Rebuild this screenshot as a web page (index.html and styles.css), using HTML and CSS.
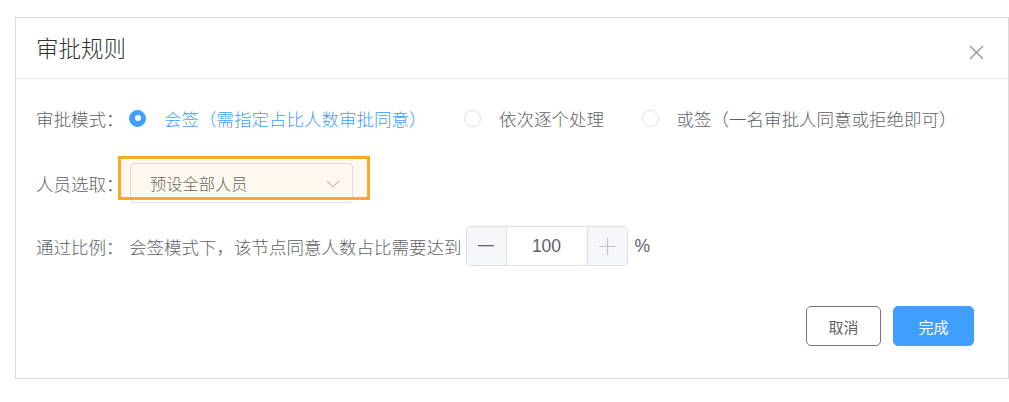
FILE: index.html
```html
<!DOCTYPE html>
<html lang="zh-CN">
<head>
<meta charset="utf-8">
<title>审批规则</title>
<link rel="stylesheet" href="styles.css">
</head>
<body>
<div class="page">
  <div class="dialog">
    <div class="header">
      <span class="title">审批规则</span>
      <span class="close" aria-label="关闭">
        <svg width="15" height="15" viewBox="0 0 15 15"><path d="M1 1 L14 14 M14 1 L1 14" stroke="#909399" stroke-width="1.3" fill="none"/></svg>
      </span>
    </div>
    <div class="body">
      <div class="row">
        <span class="label">审批模式：</span>
        <div class="radios">
          <label class="radio checked"><span class="dot"></span><span class="rtext">会签（需指定占比人数审批同意）</span></label>
          <label class="radio"><span class="dot"></span><span class="rtext">依次逐个处理</span></label>
          <label class="radio"><span class="dot"></span><span class="rtext">或签（一名审批人同意或拒绝即可）</span></label>
        </div>
      </div>
      <div class="row row-select">
        <span class="label">人员选取：</span>
        <div class="select-wrap">
          <div class="select">
            <span>预设全部人员</span>
            <svg class="chev" width="14" height="8" viewBox="0 0 14 8"><path d="M1 1 L7 7 L13 1" stroke="#c0c4cc" stroke-width="1.2" fill="none"/></svg>
          </div>
          <div class="highlight"></div>
        </div>
      </div>
      <div class="row row-ratio">
        <span class="label">通过比例：</span>
        <span class="desc">会签模式下，该节点同意人数占比需要达到</span>
        <div class="number">
          <span class="step minus">
            <svg width="16" height="2" viewBox="0 0 16 2"><rect x="0" y="0" width="16" height="1.3" fill="#606266"/></svg>
          </span>
          <span class="value">100</span>
          <span class="step plus">
            <svg width="17" height="17" viewBox="0 0 17 17"><path d="M8.5 0 V17 M0 8.5 H17" stroke="#c0c4cc" stroke-width="1.2" fill="none"/></svg>
          </span>
        </div>
        <span class="pct">%</span>
      </div>
    </div>
    <div class="footer">
      <button class="btn btn-cancel">取消</button>
      <button class="btn btn-primary">完成</button>
    </div>
  </div>
</div>
</body>
</html>
```

FILE: styles.css
```css
* { box-sizing: border-box; }
html, body {
  margin: 0;
  padding: 0;
  background: #ffffff;
  font-family: "Noto Sans CJK SC", "Noto Sans", sans-serif;
}
.page {
  padding: 17px 0 0 15px;
}
.dialog {
  width: 994px;
  border: 1px solid #dadbdd;
  background: #fff;
}
.header {
  height: 61px;
  border-bottom: 1px solid #e6e8eb;
  display: flex;
  align-items: center;
  justify-content: space-between;
  padding: 0 24px 0 20px;
}
.title {
  font-size: 22.5px;
  color: #303133;
  line-height: 1;
  margin-top: -2px;
  font-weight: 300;
}
.close {
  display: flex;
  margin-top: 9px;
}
.body {
  padding: 19px 0 0 20px;
}
.row {
  display: flex;
  align-items: center;
  height: 40px;
  font-size: 17.5px;
  color: #606266;
  font-weight: 300;
}
.row-select { margin-top: 25px; }
.row-ratio { margin-top: 23px; }
.label {
  width: 93px;
  flex: none;
  white-space: nowrap;
}
.radios {
  display: flex;
  align-items: center;
}
.radio {
  display: flex;
  align-items: center;
  margin-right: 37.5px;
  white-space: nowrap;
}
.dot {
  width: 17px;
  height: 17px;
  border-radius: 50%;
  border: 1px solid #dcdfe6;
  background: #fff;
  margin-right: 18px;
  flex: none;
  position: relative;
}
.radio.checked .dot {
  background: #409eff;
  border-color: #409eff;
}
.radio.checked .dot::after {
  content: "";
  position: absolute;
  left: 50%;
  top: 50%;
  width: 6px;
  height: 6px;
  margin: -3px 0 0 -3px;
  border-radius: 50%;
  background: #fff;
}
.radio.checked .rtext { color: #409eff; }
.select-wrap {
  position: relative;
  margin-left: 1px;
}
.select {
  width: 223px;
  height: 40px;
  border: 1px solid #dcdfe6;
  border-radius: 4px;
  background: #fff;
  display: flex;
  align-items: center;
  justify-content: space-between;
  padding: 0 12px 0 19px;
  font-size: 16.25px;
  color: #606266;
}
.chev { margin-top: 2px; }
.highlight {
  position: absolute;
  left: -12px;
  top: -7px;
  right: -17px;
  bottom: 3px;
  border: 3px solid #f7a928;
  background: rgba(245, 166, 35, 0.075);
  pointer-events: none;
}
.desc { white-space: nowrap; }
.number {
  margin-left: 4px;
  width: 162px;
  height: 40px;
  border: 1px solid #dcdfe6;
  border-radius: 4px;
  display: flex;
  overflow: hidden;
  background: #fff;
}
.step {
  width: 40px;
  flex: none;
  display: flex;
  align-items: center;
  justify-content: center;
  background: #f5f7fa;
}
.minus { border-right: 1px solid #dcdfe6; }
.plus { border-left: 1px solid #dcdfe6; }
.value {
  flex: 1;
  display: flex;
  align-items: center;
  justify-content: center;
  font-size: 17.5px;
  color: #606266;
  font-family: "Liberation Sans", "Noto Sans", sans-serif;
  font-weight: 400;
}
.pct {
  margin-left: 7px;
  font-family: "Liberation Sans", "Noto Sans", sans-serif;
  font-weight: 400;
}
.footer {
  display: flex;
  justify-content: flex-end;
  gap: 12px;
  padding: 40px 34px 32px 0;
}
.btn {
  height: 40px;
  border-radius: 5px;
  font-size: 15px;
  font-family: "Noto Sans CJK SC", sans-serif;
  padding: 0;
  cursor: pointer;
}
.btn-cancel {
  width: 75px;
  border: 1px solid #767779;
  background: #fff;
  color: #606266;
}
.btn-primary {
  width: 81px;
  border: 1px solid #409eff;
  background: #409eff;
  color: #fff;
}
```
